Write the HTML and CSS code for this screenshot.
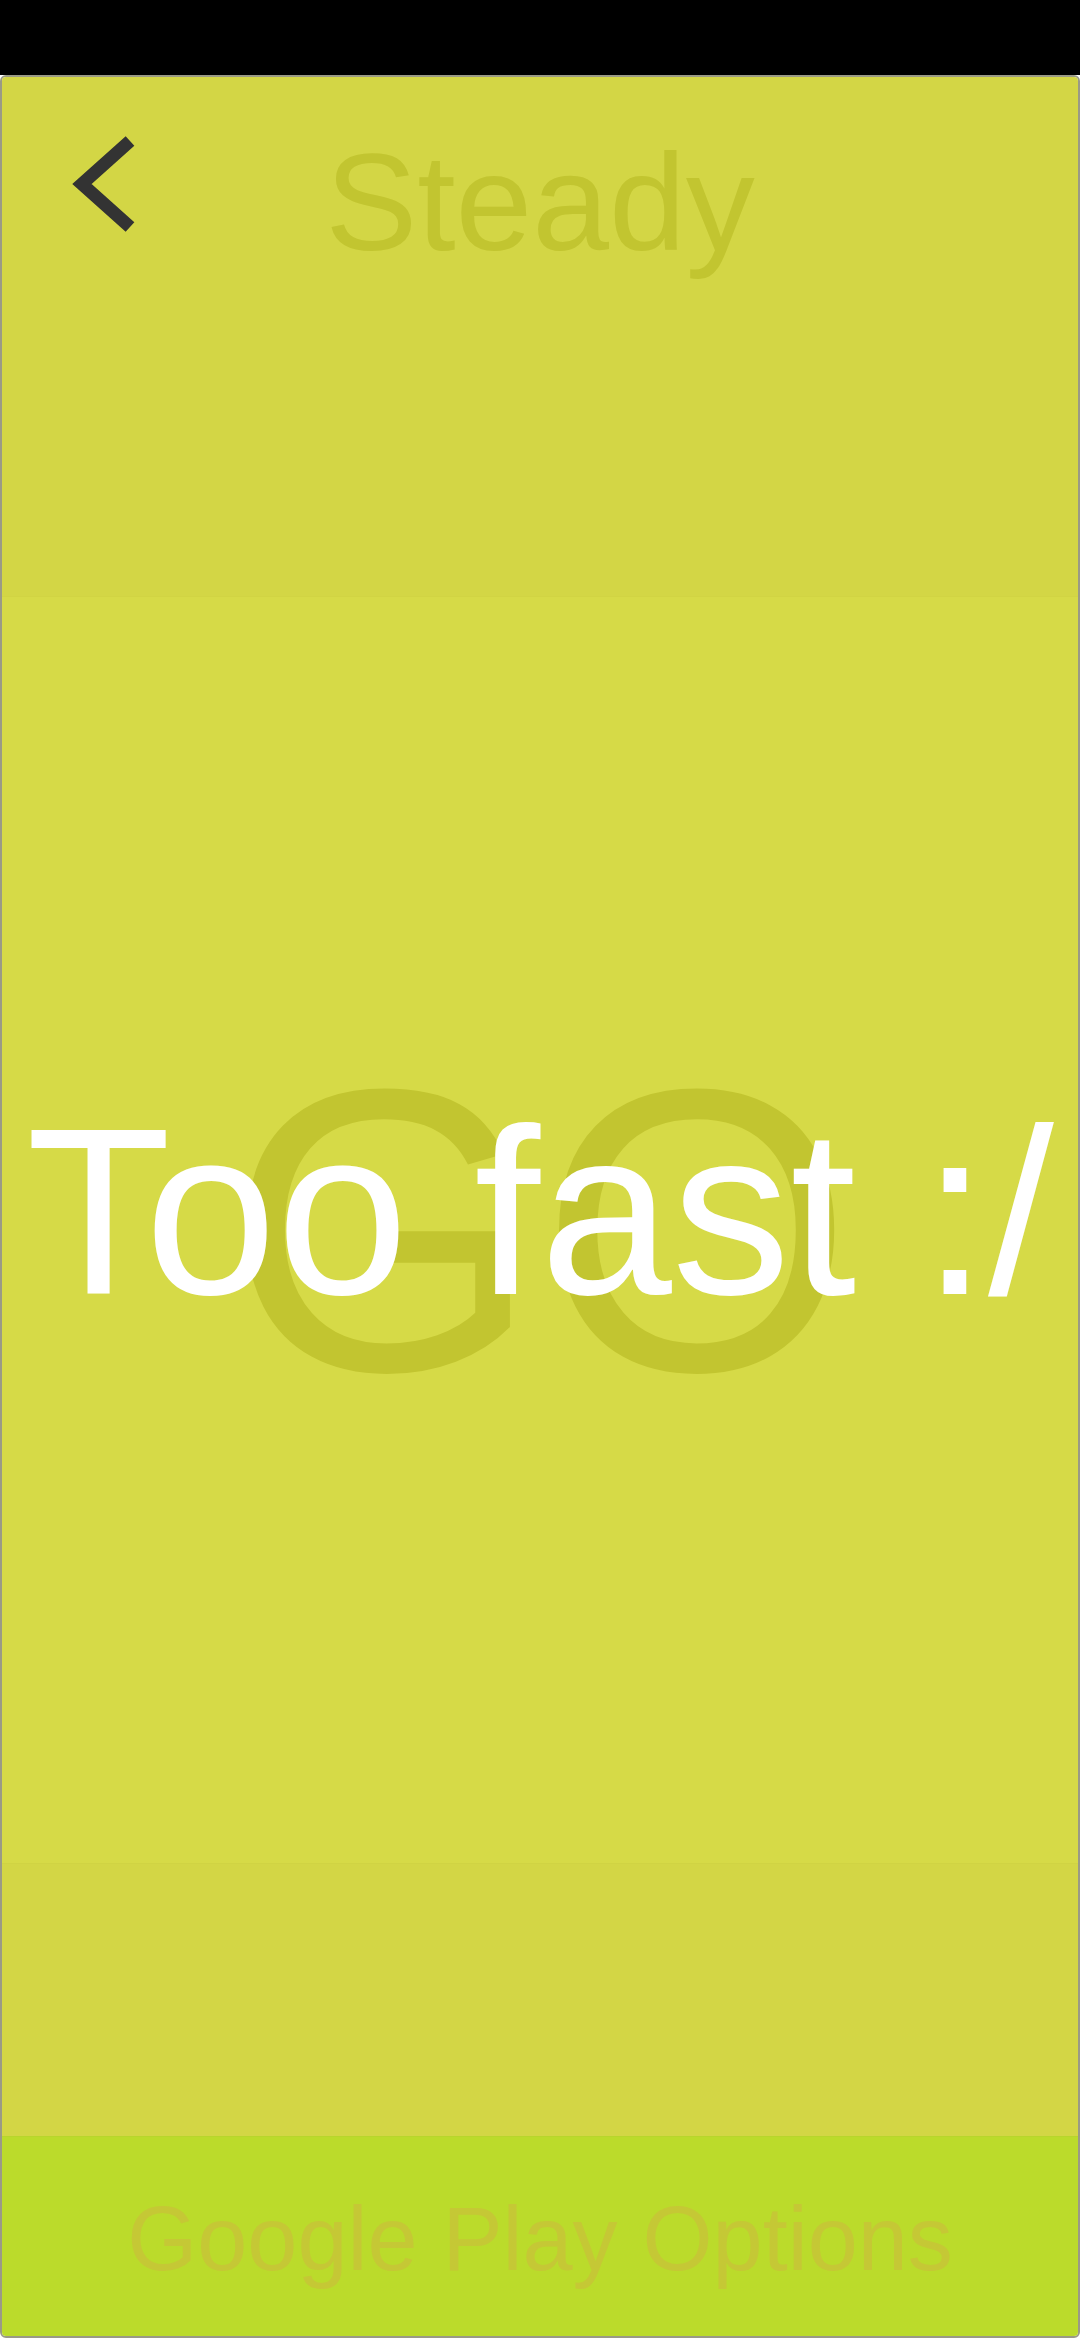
FILE: index.html
```html
<!DOCTYPE html>
<html lang="en">
<head>
<meta charset="utf-8">
<title>Steady</title>
<link rel="stylesheet" href="styles.css">
</head>
<body>
<div class="status"></div>
<div class="frame">
  <header class="header">
    <div class="back">
      <svg width="72" height="100" viewBox="0 0 72 100" aria-hidden="true">
        <path d="M60 6 L12 49 L60 92" fill="none" stroke="#333333" stroke-width="13" stroke-linejoin="miter"/>
      </svg>
    </div>
    <div class="title">Steady</div>
    <div></div>
  </header>
  <main class="main">
    <div class="go">GO</div>
    <div class="msg">Too fast :/</div>
  </main>
  <section class="lower"></section>
  <footer class="bottom">
    <div class="options">Google Play Options</div>
  </footer>
</div>
</body>
</html>
```

FILE: styles.css
```css
html, body {
  margin: 0;
  padding: 0;
}
body {
  width: 1080px;
  height: 2340px;
  background: #ffffff;
  font-family: "Liberation Sans", Arial, sans-serif;
  overflow: hidden;
}
.status {
  height: 75px;
  background: #000000;
}
.frame {
  height: 2259px;
  border: 2px solid #9a9a86;
  border-radius: 6px;
  display: flex;
  flex-direction: column;
  overflow: hidden;
}
.header {
  height: 520px;
  background: #d3d645;
  border-bottom: 1px solid #d1d443;
  box-sizing: border-box;
  display: grid;
  grid-template-columns: 1fr auto 1fr;
}
.back {
  padding: 58px 0 0 68px;
}
.back svg {
  display: block;
}
.title {
  padding-top: 56px;
  font-size: 138px;
  line-height: 1;
  color: #c2c530;
}
.main {
  height: 1266px;
  background: #d6da47;
  display: grid;
  place-items: center;
  overflow: hidden;
}
.go, .msg {
  grid-area: 1 / 1;
  line-height: 1;
  white-space: nowrap;
}
.go {
  font-size: 403px;
  color: #c2c530;
}
.msg {
  font-size: 237px;
  color: #ffffff;
  padding-bottom: 38px;
}
.lower {
  height: 273px;
  background: #d3d645;
  border-top: 1px solid #d0d343;
  box-sizing: border-box;
}
.bottom {
  height: 200px;
  background: #bbdb2b;
  border-top: 1px solid #b8d52c;
  box-sizing: border-box;
  display: flex;
  justify-content: center;
  align-items: center;
}
.options {
  font-size: 90px;
  line-height: 1;
  color: #c5c835;
  padding-top: 4px;
}
```
